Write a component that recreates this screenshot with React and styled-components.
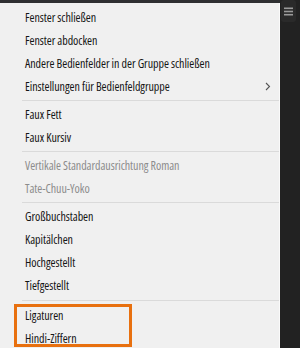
import React from "react";
import styled, { createGlobalStyle } from "styled-components";

const GlobalStyle = createGlobalStyle`
  html, body { margin: 0; padding: 0; background: #222222; }
  body { width: 300px; height: 348px; overflow: hidden; }
`;

const Frame = styled.div`
  position: relative;
  width: 300px;
  height: 348px;
  display: flex;
  flex-direction: column;
  overflow: hidden;
  background: #222222;
`;

const TopStrip = styled.div`
  height: 3px;
  flex: none;
  background: #2e2f31;
`;

const Body = styled.div`
  flex: 1;
  display: flex;
  min-height: 0;
`;

const Menu = styled.div`
  width: 279px;
  flex: none;
  background: #f0f0f0;
  border-right: 1px solid #fafafa;
  padding-top: 3px;
  display: flex;
  flex-direction: column;
`;

const Item = styled.div`
  height: 23px;
  flex: none;
  display: flex;
  align-items: center;
  justify-content: space-between;
  padding: 0 8px 0 25px;
  font-family: "Open Sans", "Noto Sans", sans-serif;
  font-stretch: 76%;
  font-weight: 430;
  font-size: 12px;
  letter-spacing: -0.05px;
  color: ${(p) => (p.$disabled ? "#8c8c8c" : "#151515")};
  white-space: nowrap;
`;

const Separator = styled.div`
  height: ${(p) => p.$h || 5}px;
  flex: none;
  display: flex;
  align-items: center;
  padding-left: 22px;
  &::after {
    content: "";
    flex: 1;
    height: 1px;
    background: #dadada;
  }
`;

const Side = styled.div`
  flex: 1;
  background: #222222;
  padding: 0 4px 0 1px;
  margin-top: -3px;
`;

const MenuButton = styled.div`
  height: 22px;
  border-radius: 3px;
  background: #2a2a2a;
  display: flex;
  align-items: center;
  justify-content: center;
`;

const Highlight = styled.div`
  position: absolute;
  left: 14px;
  top: 304px;
  width: 118px;
  height: 43px;
  box-sizing: border-box;
  border: 3px solid #e8700f;
  pointer-events: none;
`;

const Chevron = () => (
  <svg width="6" height="9" viewBox="0 0 6 9">
    <polyline points="1,1 4.5,4.5 1,8" fill="none" stroke="#555" strokeWidth="1.1" />
  </svg>
);

const Hamburger = () => (
  <svg width="9" height="9" viewBox="0 0 9 9">
    <rect x="0" y="0.5" width="9" height="1.6" fill="#9a9a9a" />
    <rect x="0" y="3.7" width="9" height="1.6" fill="#9a9a9a" />
    <rect x="0" y="6.9" width="9" height="1.6" fill="#9a9a9a" />
  </svg>
);

const groups = [
  {
    sep: 5,
    items: [
      { t: "Fenster schließen" },
      { t: "Fenster abdocken" },
      { t: "Andere Bedienfelder in der Gruppe schließen" },
      { t: "Einstellungen für Bedienfeldgruppe", sub: true },
    ],
  },
  { sep: 5, items: [{ t: "Faux Fett" }, { t: "Faux Kursiv" }] },
  {
    sep: 5,
    items: [
      { t: "Vertikale Standardausrichtung Roman", d: true },
      { t: "Tate-Chuu-Yoko", d: true },
    ],
  },
  {
    sep: 7,
    items: [
      { t: "Großbuchstaben" },
      { t: "Kapitälchen" },
      { t: "Hochgestellt" },
      { t: "Tiefgestellt" },
    ],
  },
  { items: [{ t: "Ligaturen" }, { t: "Hindi-Ziffern" }] },
];

export default function App() {
  return (
    <Frame>
      <GlobalStyle />
      <TopStrip />
      <Body>
        <Menu>
          {groups.map((g, gi) => (
            <React.Fragment key={gi}>
              {g.items.map((it) => (
                <Item key={it.t} $disabled={it.d}>
                  <span>{it.t}</span>
                  {it.sub && <Chevron />}
                </Item>
              ))}
              {g.sep && <Separator $h={g.sep} />}
            </React.Fragment>
          ))}
        </Menu>
        <Side>
          <MenuButton>
            <Hamburger />
          </MenuButton>
        </Side>
      </Body>
      <Highlight />
    </Frame>
  );
}
